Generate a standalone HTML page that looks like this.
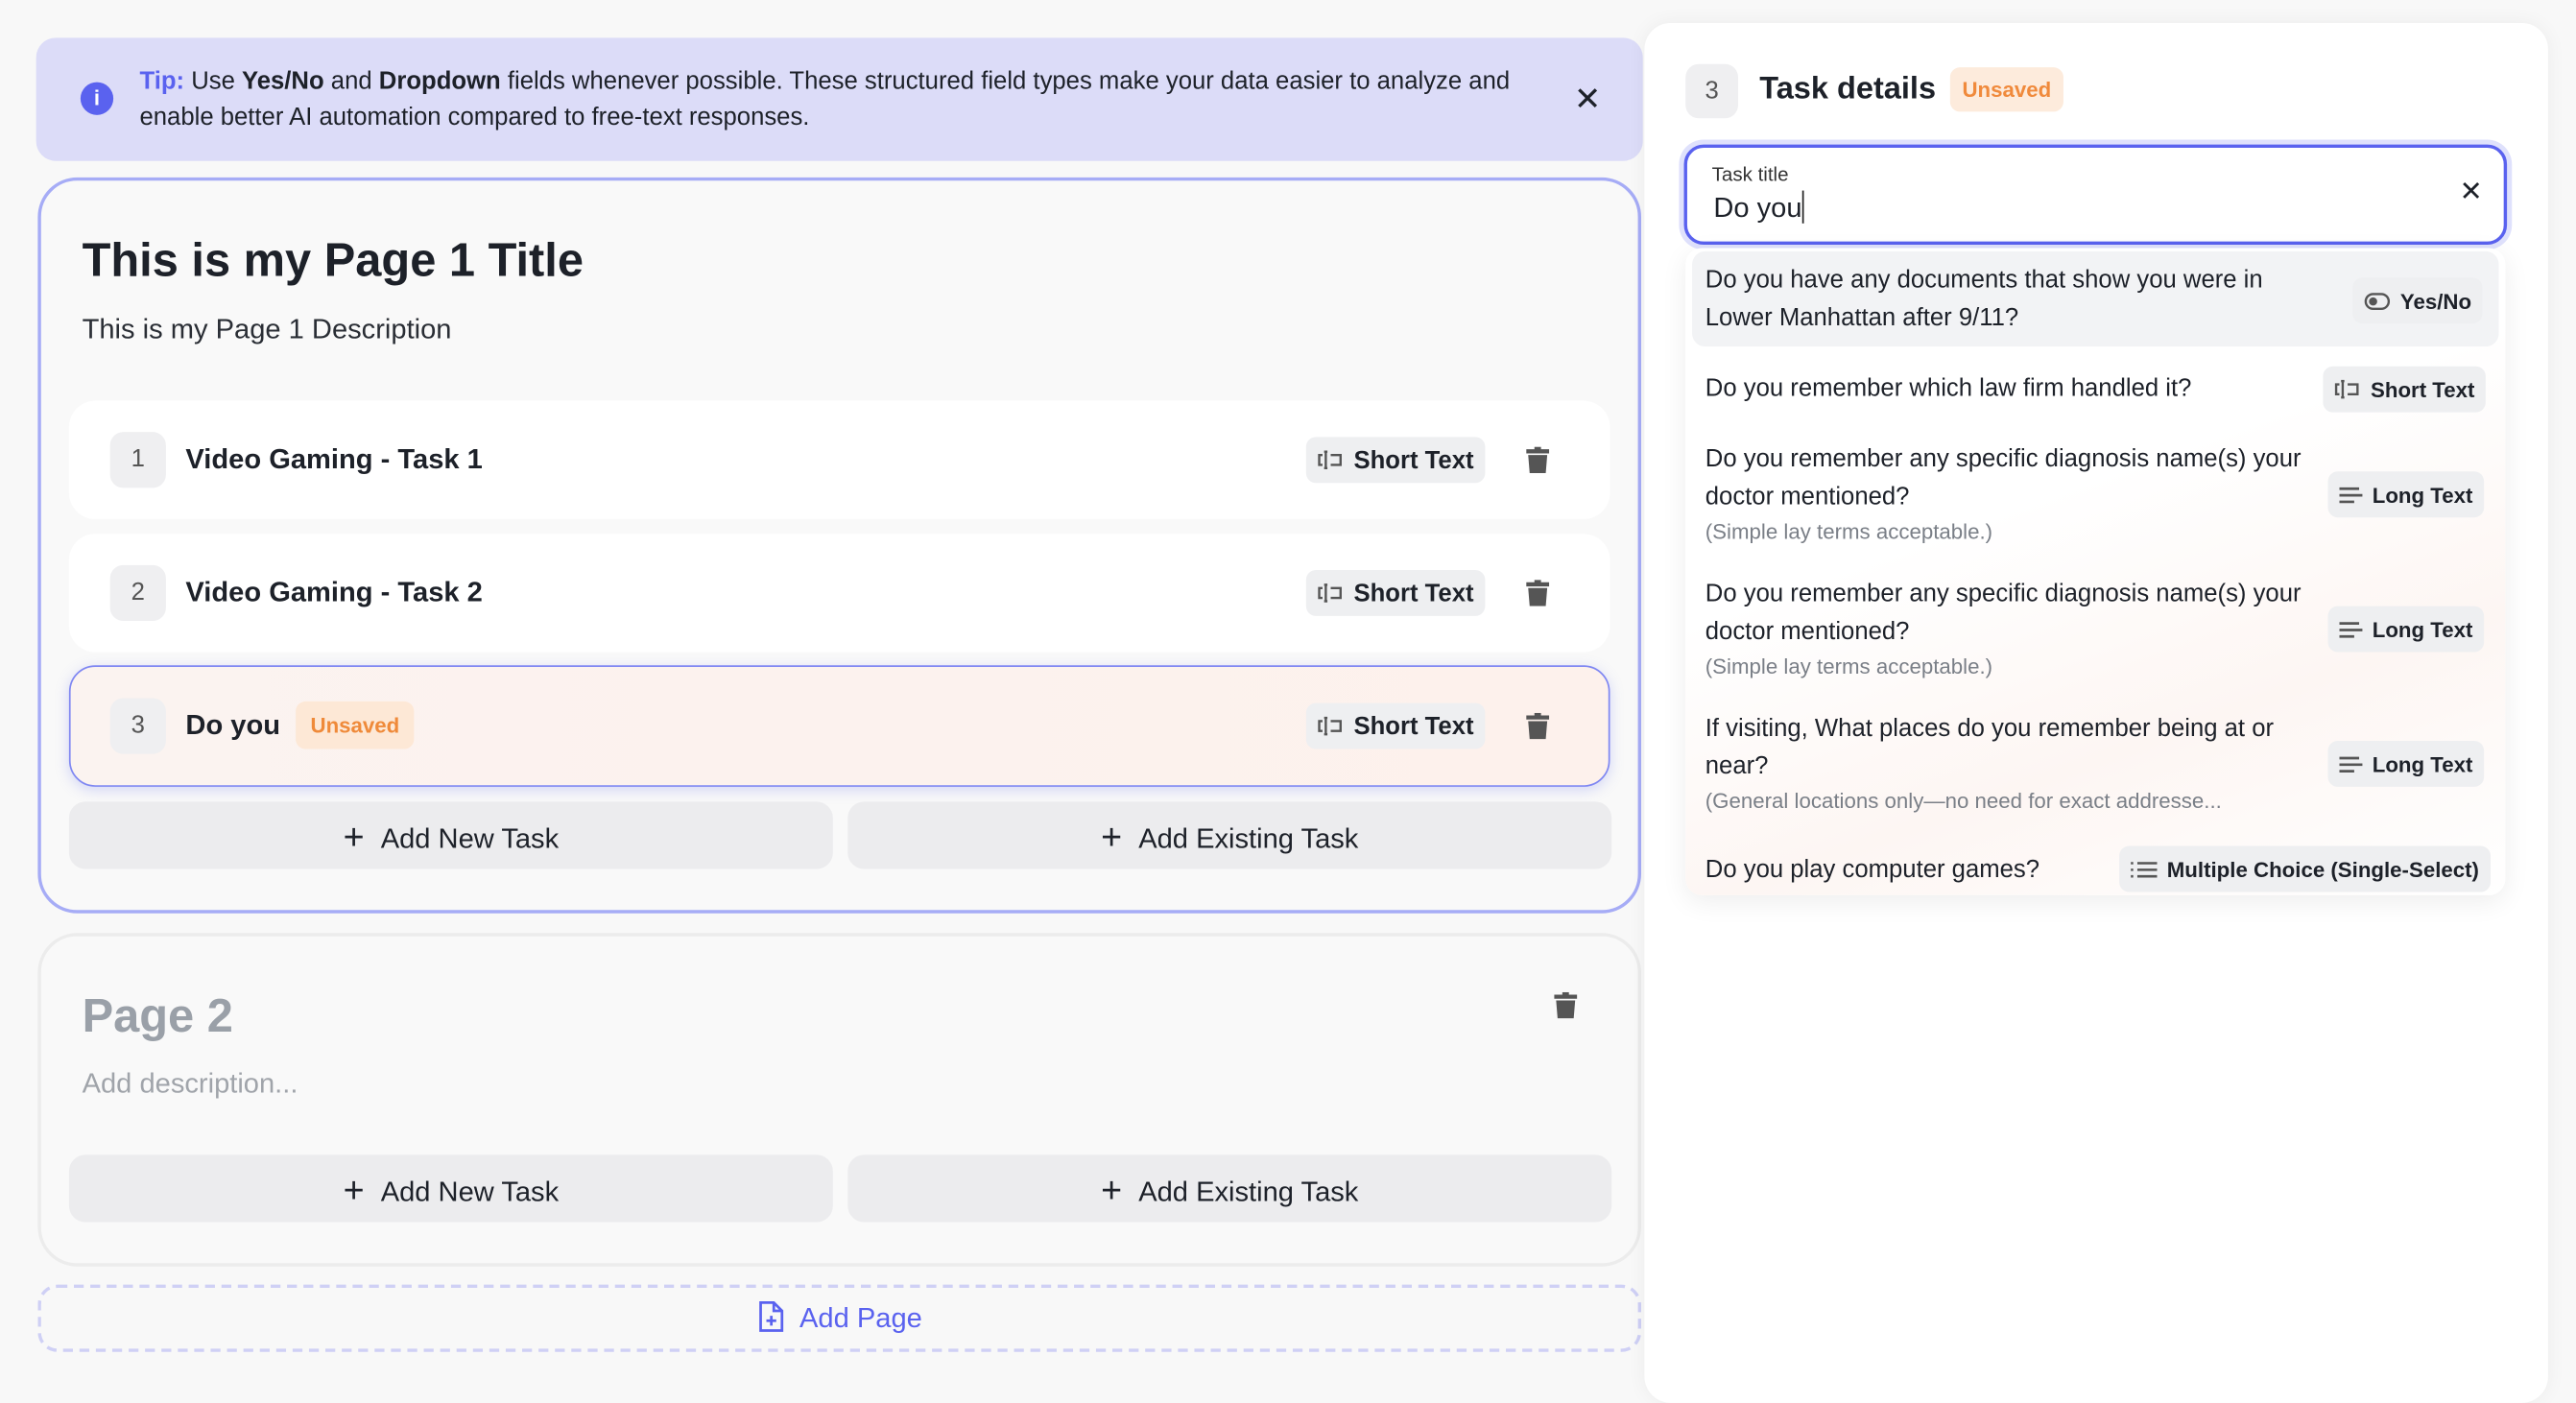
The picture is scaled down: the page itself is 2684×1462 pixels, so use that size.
<!DOCTYPE html>
<html><head><meta charset="utf-8"><style>
*{box-sizing:border-box;margin:0;padding:0}
html,body{width:2684px;height:1432px;overflow:hidden;background:#f8f8f8}
#s{position:absolute;left:0;top:0;width:1568px;height:837px;transform:scale(1.71173);transform-origin:0 0;font-family:"Liberation Sans",sans-serif;color:#1d2129}
.a{position:absolute}
.row{position:absolute;left:42px;width:938px;height:72px;background:#fff;border-radius:16px}
.num{position:absolute;left:25px;top:19px;width:34px;height:34px;background:#efeff1;border-radius:8px;font-size:15px;color:#555;text-align:center;line-height:34px}
.tt{position:absolute;left:71px;top:0;line-height:72px;font-size:17px;font-weight:bold}
.chip{position:absolute;background:#eeeff1;border-radius:6px;font-size:15px;font-weight:bold;color:#1d2129;display:flex;align-items:center;gap:6px;padding:0 7px;height:28px}
.trash{position:absolute;width:14px;height:16px}
.btn{position:absolute;height:41px;width:465px;background:#ececee;border-radius:10px;font-size:17px;color:#1d2129;text-align:center;line-height:41px}
.btn b{font-weight:normal;font-size:22px;margin-right:10px;position:relative;top:1px}
.it{position:absolute;left:1038px;font-size:15px;color:#1d2129;line-height:23px}
.sub{font-size:13px;color:#7a7f87;line-height:20px}
.c2{height:28px;font-size:13px;right:auto}
</style></head><body><div id="s">
<div class="a" style="left:22px;top:23px;width:978px;height:75px;background:#dcdcf8;border-radius:12px"></div>
<div class="a" style="left:49px;top:50px;width:20px;height:20px;border-radius:50%;background:#5a62ef;color:#fff;font-size:13px;font-weight:bold;text-align:center;line-height:20px">i</div>
<div class="a" style="left:85px;top:39px;width:870px;font-size:15px;line-height:22px;color:#1d2129"><span style="color:#5a62ef;font-weight:bold">Tip:</span> Use <b>Yes/No</b> and <b>Dropdown</b> fields whenever possible. These structured field types make your data easier to analyze and enable better AI automation compared to free-text responses.</div>
<div class="a" style="left:958px;top:48px;font-size:20px">✕</div>
<div class="a" style="left:23px;top:108px;width:976px;height:448px;border:2px solid #a6acf6;border-radius:24px;background:#f9f9f9"></div>
<div class="a" style="left:50px;top:143px;font-size:28.5px;font-weight:bold">This is my Page 1 Title</div>
<div class="a" style="left:50px;top:191px;font-size:17px;color:#2a2e35">This is my Page 1 Description</div>

<div class="row" style="top:244px"><div class="num">1</div><div class="tt">Video Gaming - Task 1</div></div>
<div class="row" style="top:325px"><div class="num">2</div><div class="tt">Video Gaming - Task 2</div></div>
<div class="row" style="top:405px;height:74px;background:linear-gradient(90deg,#fbf3f0,#fdf1ec);border:1.5px solid #7f87f2;box-shadow:0 2px 8px rgba(100,110,240,.25)"><div class="num" style="left:24px">3</div><div class="tt" style="left:70px">Do you</div><div class="a" style="left:137px;top:21px;height:29px;padding:0 9px;background:#fde8d6;border-radius:6px;color:#ef8a3a;font-size:13px;font-weight:bold;line-height:29px">Unsaved</div></div>

<div class="chip" style="left:795px;top:266px"><svg width="16" height="14" viewBox="0 0 16 14" fill="none" stroke="#555" stroke-width="1.4"><path d="M4 2h2M4 12h2M5 2v10M8 4h6v6H8M3 4H1v6h2"/></svg>Short Text</div>
<div class="chip" style="left:795px;top:347px"><svg width="16" height="14" viewBox="0 0 16 14" fill="none" stroke="#555" stroke-width="1.4"><path d="M4 2h2M4 12h2M5 2v10M8 4h6v6H8M3 4H1v6h2"/></svg>Short Text</div>
<div class="chip" style="left:795px;top:428px"><svg width="16" height="14" viewBox="0 0 16 14" fill="none" stroke="#555" stroke-width="1.4"><path d="M4 2h2M4 12h2M5 2v10M8 4h6v6H8M3 4H1v6h2"/></svg>Short Text</div>
<svg class="trash" style="left:929px;top:272px" viewBox="0 0 14 16"><path d="M5 0h4v1.5h5V4H0V1.5h5z M1.2 5h11.6l-.9 11H2.1z" fill="#555"/></svg>
<svg class="trash" style="left:929px;top:353px" viewBox="0 0 14 16"><path d="M5 0h4v1.5h5V4H0V1.5h5z M1.2 5h11.6l-.9 11H2.1z" fill="#555"/></svg>
<svg class="trash" style="left:929px;top:434px" viewBox="0 0 14 16"><path d="M5 0h4v1.5h5V4H0V1.5h5z M1.2 5h11.6l-.9 11H2.1z" fill="#555"/></svg>

<div class="btn" style="left:42px;top:488px"><b>+</b>Add New Task</div>
<div class="btn" style="left:516px;top:488px"><b>+</b>Add Existing Task</div>

<div class="a" style="left:23px;top:568px;width:976px;height:203px;border:2px solid #ececec;border-radius:24px;background:#f9f9f9"></div>
<div class="a" style="left:50px;top:603px;font-size:28.5px;font-weight:bold;color:#9aa0a8">Page 2</div>
<div class="a" style="left:50px;top:650px;font-size:17px;color:#a0a4aa">Add description...</div>
<svg class="trash" style="left:946px;top:604px" viewBox="0 0 14 16"><path d="M5 0h4v1.5h5V4H0V1.5h5z M1.2 5h11.6l-.9 11H2.1z" fill="#555"/></svg>
<div class="btn" style="left:42px;top:703px"><b>+</b>Add New Task</div>
<div class="btn" style="left:516px;top:703px"><b>+</b>Add Existing Task</div>

<div class="a" style="left:23px;top:782px;width:976px;height:41px;border:2px dashed #cfd0f5;border-radius:12px;text-align:center;line-height:37px;font-size:17px;color:#5a62ef"><svg width="16" height="19" viewBox="0 0 16 19" fill="none" stroke="#5a62ef" stroke-width="1.6" style="vertical-align:-3px;margin-right:10px"><path d="M2 1h8l5 5v12H2z M10 1v5h5 M8.5 9v6 M5.5 12h6"/></svg>Add Page</div>

<div class="a" style="left:1001px;top:14px;width:550px;height:840px;background:#fff;border-radius:16px;box-shadow:0 0 12px rgba(0,0,0,.05)"></div>
<div class="a" style="left:1026px;top:39px;width:32px;height:33px;background:#efeff1;border-radius:8px;text-align:center;line-height:33px;font-size:15px;color:#555">3</div>
<div class="a" style="left:1071px;top:44px;font-size:19px;font-weight:bold">Task details</div>
<div class="a" style="left:1187px;top:41px;width:69px;height:27px;background:#fdebdc;border-radius:6px;color:#f08a3c;font-size:13px;font-weight:bold;text-align:center;line-height:27px">Unsaved</div>

<div class="a" style="left:1025px;top:88px;width:501px;height:61px;border:2px solid #5a62ef;border-radius:12px;box-shadow:0 0 0 3px #dfe1fc;background:#fff"></div>
<div class="a" style="left:1042px;top:99px;font-size:12px;color:#333">Task title</div>
<div class="a" style="left:1043px;top:116px;font-size:17px;color:#1d2129">Do you<span style="display:inline-block;width:1px;height:20px;background:#222;vertical-align:-4px"></span></div>
<div class="a" style="left:1497px;top:107px;font-size:17px">✕</div>

<div class="a" style="left:1026px;top:151px;width:499px;height:394px;background:linear-gradient(160deg,#fff 40%,#fdf6f3 70%,#fff);border-radius:10px;box-shadow:0 4px 16px rgba(0,0,0,.07)"></div>
<div class="a" style="left:1030px;top:153px;width:491px;height:58px;background:#f2f3f5;border-radius:8px"></div>
<div class="it" style="top:159px">Do you have any documents that show you were in<br>Lower Manhattan after 9/11?</div>
<div class="chip c2" style="left:1432px;top:169px"><svg width="16" height="11" viewBox="0 0 16 11" fill="none" stroke="#555" stroke-width="1.4"><rect x="1" y="1" width="14" height="9" rx="4.5"/><circle cx="5.5" cy="5.5" r="1.8" fill="#555"/></svg>Yes/No</div>
<div class="it" style="top:225px">Do you remember which law firm handled it?</div>
<div class="chip c2" style="left:1414px;top:223px"><svg width="16" height="14" viewBox="0 0 16 14" fill="none" stroke="#555" stroke-width="1.4"><path d="M4 2h2M4 12h2M5 2v10M8 4h6v6H8M3 4H1v6h2"/></svg>Short Text</div>
<div class="it" style="top:268px">Do you remember any specific diagnosis name(s) your<br>doctor mentioned?<div class="sub">(Simple lay terms acceptable.)</div></div>
<div class="chip c2" style="left:1417px;top:287px"><svg width="14" height="11" viewBox="0 0 14 11" stroke="#555" stroke-width="1.6"><path d="M0 1.5h12M0 5.5h14M0 9.5h9"/></svg>Long Text</div>
<div class="it" style="top:350px">Do you remember any specific diagnosis name(s) your<br>doctor mentioned?<div class="sub">(Simple lay terms acceptable.)</div></div>
<div class="chip c2" style="left:1417px;top:369px"><svg width="14" height="11" viewBox="0 0 14 11" stroke="#555" stroke-width="1.6"><path d="M0 1.5h12M0 5.5h14M0 9.5h9"/></svg>Long Text</div>
<div class="it" style="top:432px">If visiting, What places do you remember being at or<br>near?<div class="sub">(General locations only—no need for exact addresse...</div></div>
<div class="chip c2" style="left:1417px;top:451px"><svg width="14" height="11" viewBox="0 0 14 11" stroke="#555" stroke-width="1.6"><path d="M0 1.5h12M0 5.5h14M0 9.5h9"/></svg>Long Text</div>
<div class="it" style="top:518px">Do you play computer games?</div>
<div class="chip c2" style="left:1290px;top:515px"><svg width="16" height="11" viewBox="0 0 16 11" stroke="#555" stroke-width="1.5"><path d="M4 1.5h12M4 5.5h12M4 9.5h12M0 1.5h1.5M0 5.5h1.5M0 9.5h1.5"/></svg>Multiple Choice (Single-Select)</div>
</div></body></html>
